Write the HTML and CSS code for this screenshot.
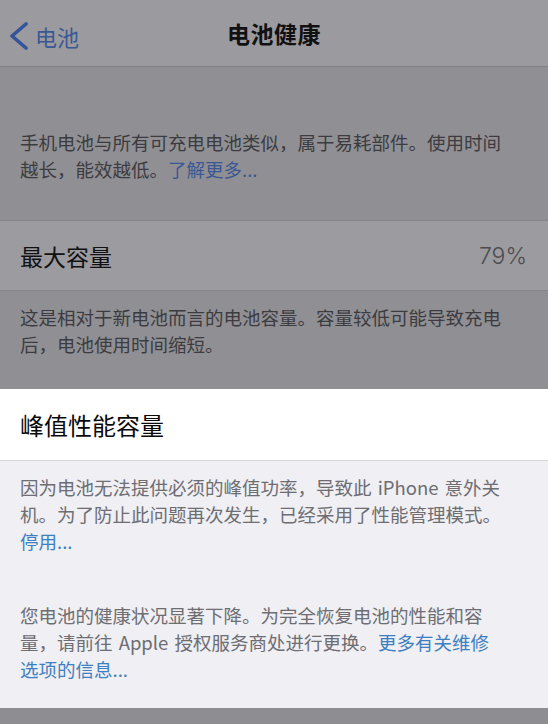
FILE: index.html
```html
<!DOCTYPE html>
<html lang="zh-CN">
<head>
<meta charset="utf-8">
<title>电池健康</title>
<link rel="stylesheet" href="styles.css">
</head>
<body>
<div class="screen">
  <header class="nav">
    <a class="back">
      <svg class="chev" width="20" height="28" viewBox="0 0 20 28"><polyline points="17,2 3,14 17,26" fill="none" stroke="#33549a" stroke-width="3.6" stroke-linecap="round" stroke-linejoin="round"/></svg>
      <span>电池</span>
    </a>
    <h1 class="title">电池健康</h1>
  </header>

  <section class="dim">
    <p class="foot foot-first">手机电池与所有可充电电池类似，属于易耗部件。使用时间越长，能效越低。<span class="link">了解更多...</span></p>
    <div class="cell cell-dim">
      <span class="label">最大容量</span>
      <span class="value">79%</span>
    </div>
    <p class="foot foot-second">这是相对于新电池而言的电池容量。容量较低可能导致充电后，电池使用时间缩短。</p>
  </section>

  <section class="lit">
    <div class="cell cell-lit">
      <span class="label">峰值性能容量</span>
    </div>
    <p class="foot foot-lit">因为电池无法提供必须的峰值功率，导致此 iPhone 意外关机。为了防止此问题再次发生，已经采用了性能管理模式。<span class="link">停用...</span></p>
    <p class="foot foot-lit foot-last">您电池的健康状况显著下降。为完全恢复电池的性能和容量，请前往 Apple 授权服务商处进行更换。<span class="link">更多有关维修选项的信息...</span></p>
  </section>

  <div class="bottom"></div>
</div>
</body>
</html>
```

FILE: styles.css
```css
html, body {
  margin: 0;
  padding: 0;
}
body {
  width: 548px;
  height: 724px;
  overflow: hidden;
  font-family: "Noto Sans CJK SC", "Noto Sans", sans-serif;
  background: #8e8d92;
}
.screen {
  display: flex;
  flex-direction: column;
  height: 724px;
}
.nav {
  height: 66px;
  background: #9b9a9e;
  border-bottom: 1px solid #7f7e83;
  display: flex;
  align-items: center;
  justify-content: center;
  position: relative;
}
.back {
  position: absolute;
  left: 9px;
  top: 21px;
  display: flex;
  align-items: center;
  gap: 6px;
  color: #3a5894;
  font-size: 22px;
  line-height: 30px;
}
.chev {
  display: block;
}
.title {
  margin: 0;
  font-size: 23px;
  font-weight: 600;
  color: #111113;
  letter-spacing: 0.5px;
}
.dim {
  background: #908f94;
  display: flex;
  flex-direction: column;
}
.foot {
  margin: 0;
  padding: 0 45px 0 20px;
  font-size: 18.5px;
  line-height: 27px;
  word-spacing: 2px;
}
.dim .foot {
  color: #3c3c40;
}
.dim .link {
  color: #3a5894;
}
.foot-first {
  padding-top: 62px;
  padding-bottom: 37px;
}
.foot-second {
  padding-top: 13px;
  padding-bottom: 31px;
}
.cell {
  display: flex;
  align-items: center;
  justify-content: space-between;
  padding: 0 21px 0 20px;
}
.cell-dim {
  background: #9c9b9f;
  height: 69px;
  border-top: 1px solid #858489;
  border-bottom: 1px solid #858489;
}
.cell .label {
  font-size: 23px;
  color: #111113;
}
.cell .value {
  font-size: 23px;
  color: #4d4d51;
  font-family: "Inter", "Noto Sans", sans-serif;
  font-weight: 300;
}
.lit {
  background: #efeff4;
  display: flex;
  flex-direction: column;
  flex: 1;
}
.cell-lit {
  background: #ffffff;
  height: 71px;
  border-bottom: 1px solid #d6d6da;
}
.cell-lit .label {
  font-size: 24px;
  color: #0a0a0a;
}
.foot-lit {
  color: #6d6d72;
  padding-top: 13px;
}
.foot-lit .link {
  color: #3d7fc0;
}
.foot-last {
  padding-top: 47px;
}
.bottom {
  height: 16px;
  background: #8e8d92;
}
```
